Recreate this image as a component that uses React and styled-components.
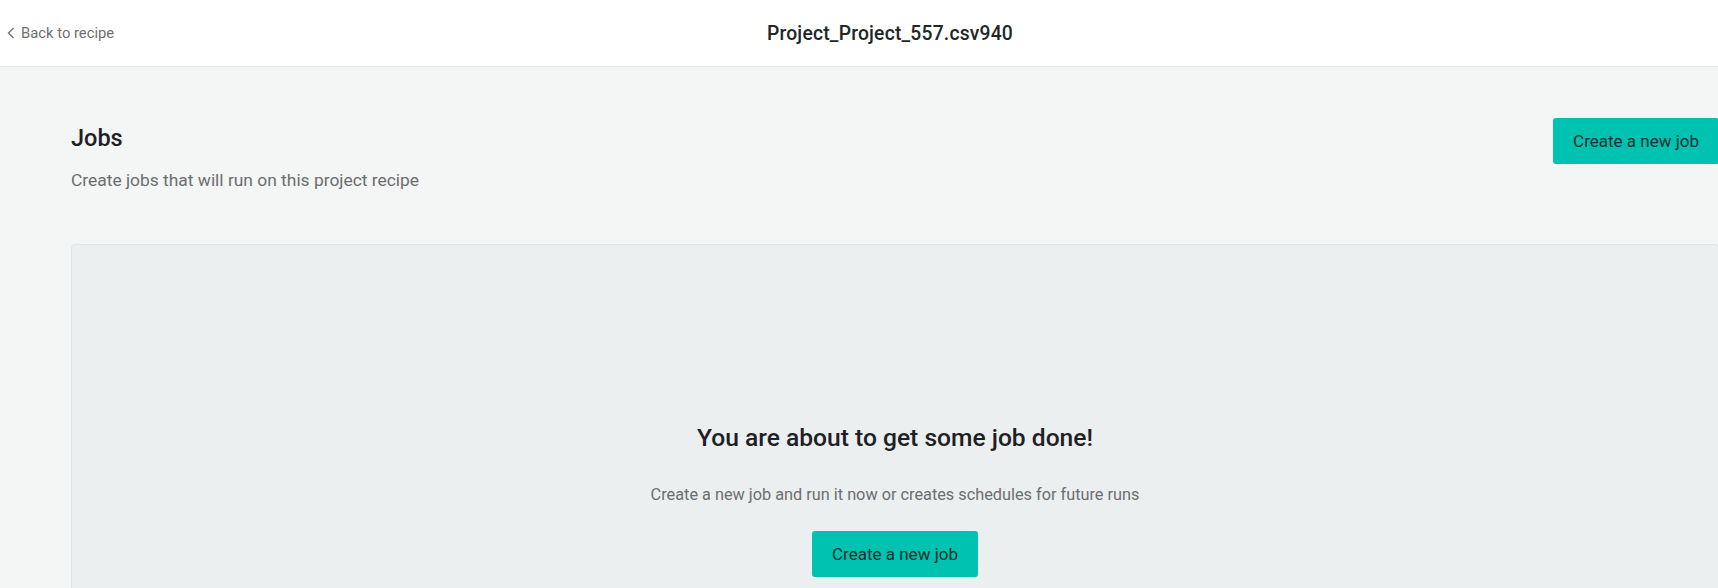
import React from 'react';
import styled, { createGlobalStyle } from 'styled-components';

const GlobalStyle = createGlobalStyle`
  html, body {
    margin: 0;
    padding: 0;
    overflow: hidden;
    background: #f4f5f5;
    font-family: Roboto, "Liberation Sans", sans-serif;
  }
`;

const Page = styled.div`
  width: 1790px;
  min-height: 588px;
  background: #f4f5f5;
`;

const TopBar = styled.header`
  display: grid;
  grid-template-columns: 1fr auto 1fr;
  align-items: center;
  height: 66px;
  padding-right: 10px;
  background: #ffffff;
  border-bottom: 1px solid #e4e6e6;
`;

const BackLink = styled.a`
  display: flex;
  align-items: center;
  gap: 6px;
  padding-left: 7px;
  font-size: 14.8px;
  color: #6f6f6f;
  text-decoration: none;
  cursor: pointer;
`;

const FileTitle = styled.h1`
  margin: 0;
  font-size: 19.3px;
  font-weight: 500;
  color: #222629;
  letter-spacing: 0.2px;
`;

const Main = styled.main`
  padding: 51px 71px 0;
`;

const HeadRow = styled.div`
  display: flex;
  justify-content: space-between;
  align-items: flex-start;
`;

const Heading = styled.h2`
  margin: 7px 0 0;
  font-size: 23.5px;
  line-height: 26px;
  font-weight: 500;
  color: #1e2124;
`;

const Lead = styled.p`
  margin: 19px 0 0;
  font-size: 17.4px;
  line-height: 20px;
  color: #6b6e70;
`;

const Button = styled.button`
  height: 46px;
  padding: 0 20px;
  border: none;
  border-radius: 3px;
  background: #00c2b1;
  color: #17302e;
  font-family: inherit;
  font-size: 17px;
  cursor: pointer;
`;

const Card = styled.section`
  margin-top: 54px;
  min-height: 420px;
  display: flex;
  justify-content: center;
  background: #eceff0;
  border: 1px solid #e2e5e6;
  border-radius: 4px;
`;

const Empty = styled.div`
  display: flex;
  flex-direction: column;
  align-items: center;
  padding-top: 180px;
`;

const EmptyTitle = styled.h3`
  margin: 0;
  font-size: 24.6px;
  line-height: 26px;
  font-weight: 500;
  color: #1e2124;
`;

const EmptyText = styled.p`
  margin: 34px 0 26px;
  font-size: 16.3px;
  line-height: 20px;
  color: #6b6e70;
`;

const Chevron = () => (
  <svg width="8" height="12" viewBox="0 0 8 12" fill="none">
    <path d="M6.5 1 L1.5 6 L6.5 11" stroke="#6f6f6f" strokeWidth="1.3" />
  </svg>
);

export default function App() {
  return (
    <Page>
      <GlobalStyle />
      <TopBar>
        <BackLink>
          <Chevron />
          Back to recipe
        </BackLink>
        <FileTitle>Project_Project_557.csv940</FileTitle>
        <div />
      </TopBar>
      <Main>
        <HeadRow>
          <div>
            <Heading>Jobs</Heading>
            <Lead>Create jobs that will run on this project recipe</Lead>
          </div>
          <Button>Create a new job</Button>
        </HeadRow>
        <Card>
          <Empty>
            <EmptyTitle>You are about to get some job done!</EmptyTitle>
            <EmptyText>Create a new job and run it now or creates schedules for future runs</EmptyText>
            <Button>Create a new job</Button>
          </Empty>
        </Card>
      </Main>
    </Page>
  );
}
